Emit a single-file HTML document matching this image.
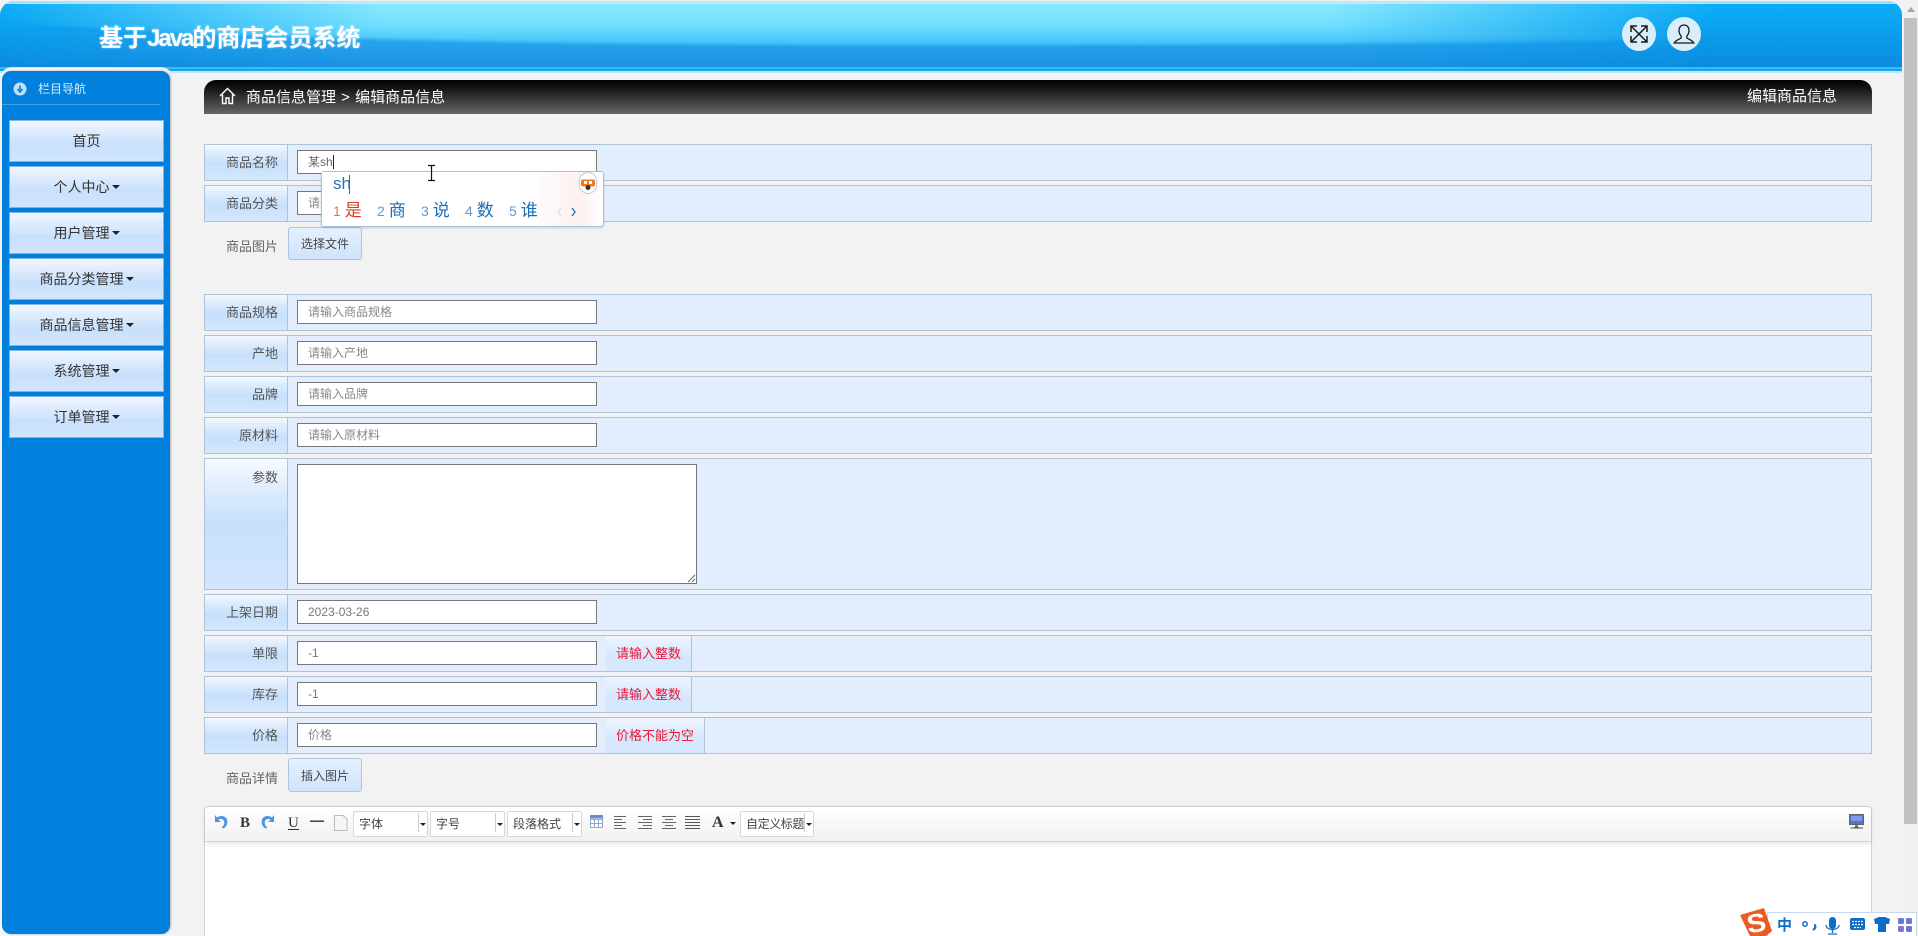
<!DOCTYPE html>
<html lang="zh-CN"><head><meta charset="utf-8"><title>编辑商品信息</title>
<style>
*{box-sizing:border-box;margin:0;padding:0}
html,body{width:1918px;height:936px;overflow:hidden;background:#f2f2f2;font-family:"Liberation Sans","Noto Sans CJK SC",sans-serif;font-size:13px;color:#555}
#page{position:relative;width:1918px;height:936px;overflow:hidden}
.a{position:absolute}
#hd{left:0;top:1px;width:1902px;height:72px;border-radius:14px 14px 0 0;overflow:hidden;background:linear-gradient(180deg,#0db0fa 0,#0a9eec 45%,#0b8ce0 90%)}
#sbwrap{left:0;top:68px;width:173px;height:868px;background:#f6f6f6;border-radius:12px 12px 0 0;box-shadow:0 -1px 0 #cfe4f4}
#sb{left:2px;top:71px;width:168px;height:863px;background:#0080dc;border-radius:9px;box-shadow:1px 0 2px #aaa}
.btn{position:absolute;left:9px;width:155px;height:42px;background:linear-gradient(180deg,#f1f7ff 0,#d9e9fd 35%,#c8e0fb 60%,#d2e6fd 100%);border:1px solid #7db5e6;text-align:center;line-height:40px;font-size:14px;color:#333}
.car{display:inline-block;width:0;height:0;border-left:4px solid transparent;border-right:4px solid transparent;border-top:4px solid #222;vertical-align:3px;margin-left:2px}
#bc{left:204px;top:80px;width:1668px;height:34px;border-radius:12px 12px 0 0;background:linear-gradient(180deg,#000 0,#161616 25%,#666 100%);color:#fff;font-size:15px;line-height:36px}
.row{position:absolute;left:204px;width:1668px;background:#e2eefe;border:1px solid #aec3d9}
.lab{position:absolute;left:0;top:0;bottom:0;width:83px;background:linear-gradient(180deg,#f4f8ff 0,#dcebfd 25%,#c7e0fb 55%,#d4e7fd 100%);border-right:1px solid #aec3d9;text-align:right;padding-right:9px;line-height:36px;color:#555}
.lab2{position:absolute;left:204px;width:83px;text-align:right;padding-right:9px;color:#666}
.inp{position:absolute;left:92px;top:5px;width:300px;height:24px;background:#fff;border:1px solid #777;font-size:12px;line-height:23px;padding-left:10px;color:#888}
.err{position:absolute;left:401px;top:0;bottom:0;background:linear-gradient(180deg,#eef5ff 0,#d5e7fc 60%,#d6e8fd 100%);border-right:1px solid #aec3d9;color:#e8173a;font-size:13px;line-height:36px;text-align:center;white-space:nowrap}
.fb{position:absolute;left:288px;width:74px;background:linear-gradient(180deg,#e6f0fe 0,#cfe3fb 100%);border:1px solid #a9c6e4;border-radius:3px;text-align:center;font-size:12px;color:#444}
#ed{left:204px;top:806px;width:1668px;height:130px;background:#fff;border:1px solid #d2d2d2;border-bottom:0;border-radius:4px 4px 0 0}
#tb{left:0;top:0;right:0;height:35px;background:linear-gradient(180deg,#fff 0,#f1f1f1 100%);border-bottom:1px solid #d4d4d4;box-shadow:0 2px 5px rgba(0,0,0,.1);border-radius:4px 4px 0 0}
.sel{position:absolute;top:811px;height:26px;width:75px;background:#fff;border:1px solid #d8d8d8;border-radius:2px;font-size:12px;line-height:24px;padding-left:5px;color:#444;white-space:nowrap;overflow:hidden}
.sel i{position:absolute;right:8px;top:1px;bottom:4px;width:1px;background:#ccc}
.sel b{position:absolute;right:1px;top:11px;width:0;height:0;border-left:3px solid transparent;border-right:3px solid transparent;border-top:3px solid #222}
.cand{position:absolute;top:199px;font-size:17px;line-height:24px;color:#1e6db5;white-space:nowrap}
.cand span{font-size:14px;color:#6d98c4;margin-right:4px}
</style></head><body>
<div id="page">

<div id="hd" class="a">
<svg class="a" style="left:0;top:0" width="1902" height="72">
<defs>
<linearGradient id="w" x1="0" y1="0" x2="0" y2="1"><stop offset="0" stop-color="#8ce8ff"/><stop offset=".55" stop-color="#72dffe"/><stop offset="1" stop-color="#3ec2f8"/></linearGradient>
<linearGradient id="fade" x1="0" y1="0" x2="1" y2="0"><stop offset="0" stop-color="#000"/><stop offset=".2" stop-color="#fff"/><stop offset=".7" stop-color="#fff"/><stop offset=".9" stop-color="#000"/></linearGradient>
<linearGradient id="lo" x1="0" y1="0" x2="0" y2="1"><stop offset="0" stop-color="#2eaaf0"/><stop offset="1" stop-color="#1b90e2"/></linearGradient>
<mask id="m"><rect width="1902" height="72" fill="url(#fade)"/></mask>
<filter id="bl" x="-5%" y="-10%" width="110%" height="120%"><feGaussianBlur stdDeviation="1.500"/></filter>
</defs>
<rect y="30" width="1902" height="38" fill="url(#lo)" mask="url(#m)"/>
<path d="M0 0H1902V30C1700 42 1300 44 900 44C600 44 300 40 0 22Z" fill="url(#w)" mask="url(#m)" filter="url(#bl)"/>
<rect width="1902" height="3" fill="#cdeefc" opacity=".8"/>
<rect x="0" y="66" width="1902" height="2" fill="#36bdf0"/>
<rect x="0" y="68" width="1902" height="2" fill="#1aa5ea"/>
<rect x="0" y="70" width="1902" height="2" fill="#bfe6f8"/>
</svg>
</div>
<div class="a" style="left:99px;top:21px;font-size:24px;font-weight:700;color:#fff;line-height:36px;white-space:nowrap;text-shadow:0 0 2px rgba(255,255,255,.5)">基于<span style="letter-spacing:-2px">Java</span>的商店会员系统</div>

<svg class="a" style="left:1620px;top:15px" width="84" height="38">
<circle cx="19" cy="19" r="17" fill="#d8eefb"/><circle cx="64" cy="19" r="17" fill="#d8eefb"/>
<path d="M11 11L27 27M27 11L11 27M11 17V11H17M21 11H27V17M11 21V27H17M21 27H27V21" fill="none" stroke="#1a1a1a" stroke-width="1.500"/>
<path d="M64 10c-3.500 0-5 2.700-5 5.500 0 2.700 1.200 4.500 2.200 5.700v1.800c-1.800 1.300-5.500 2-7 5h19.600c-1.500-3-5.200-3.700-7-5v-1.800c1-1.200 2.200-3 2.200-5.700 0-2.800-1.500-5.500-5-5.500z" fill="none" stroke="#1a1a1a" stroke-width="1.300"/>
</svg>

<!-- scrollbar -->
<div class="a" style="left:1903px;top:0;width:15px;height:936px;background:#f1f1f1"></div>
<div class="a" style="left:1904px;top:18px;width:13px;height:806px;background:#c1c1c1"></div>
<div class="a" style="left:1907px;top:7px;width:0;height:0;border-left:4px solid transparent;border-right:4px solid transparent;border-bottom:5px solid #a5a5a5"></div>

<!-- sidebar -->
<div id="sbwrap" class="a"></div>
<div id="sb" class="a"></div>
<svg class="a" style="left:13px;top:82px" width="14" height="14"><circle cx="7" cy="7" r="6.500" fill="#bfe3fa"/><path d="M7 3.500V9M4.500 7L7 10L9.500 7" stroke="#1a86d8" stroke-width="1.800" fill="none"/></svg>
<div class="a" style="left:38px;top:80px;color:#d8ecfb;font-size:12px;line-height:18px">栏目导航</div>
<div class="a" style="left:2px;top:104px;width:158px;height:1px;background:#3aa3ea"></div>
<div class="btn" style="top:120px">首页</div>
<div class="btn" style="top:166px">个人中心<span class="car"></span></div>
<div class="btn" style="top:212px">用户管理<span class="car"></span></div>
<div class="btn" style="top:258px">商品分类管理<span class="car"></span></div>
<div class="btn" style="top:304px">商品信息管理<span class="car"></span></div>
<div class="btn" style="top:350px">系统管理<span class="car"></span></div>
<div class="btn" style="top:396px">订单管理<span class="car"></span></div>

<!-- breadcrumb -->
<div id="bc" class="a">
<svg class="a" style="left:15px;top:7px" width="17" height="18"><path d="M1 9L8.500 1.500L16 9M3.500 7.500V16.500H7V11H10V16.500H13.500V7.500" fill="none" stroke="#fff" stroke-width="1.400"/></svg>
<span class="a" style="left:42px;top:0;white-space:nowrap">商品信息管理<span style="margin:0 1px"> &gt; </span>编辑商品信息</span>
<span class="a" style="left:1543px;top:-1px;white-space:nowrap">编辑商品信息</span>
</div>

<!-- rows -->
<div class="row" style="top:144px;height:37px"><div class="lab">商品名称</div><div class="inp" style="color:#666">某sh<span style="border-right:1px solid #222"></span></div></div>
<div class="row" style="top:185px;height:37px"><div class="lab">商品分类</div><div class="inp">请选择商品分类</div></div>
<div class="lab2" style="top:237px;line-height:20px">商品图片</div>
<div class="fb" style="top:227px;height:33px;line-height:33px">选择文件</div>
<div class="row" style="top:294px;height:37px"><div class="lab">商品规格</div><div class="inp">请输入商品规格</div></div>
<div class="row" style="top:335px;height:37px"><div class="lab">产地</div><div class="inp">请输入产地</div></div>
<div class="row" style="top:376px;height:37px"><div class="lab">品牌</div><div class="inp">请输入品牌</div></div>
<div class="row" style="top:417px;height:37px"><div class="lab">原材料</div><div class="inp">请输入原材料</div></div>
<div class="row" style="top:458px;height:132px"><div class="lab" style="line-height:37px;background:linear-gradient(180deg,#f8fbff 0,#dcebfd 25%,#c7e0fb 50%,#d2e6fd 100%)">参数</div>
<div class="inp" style="top:5px;width:400px;height:120px"><svg class="a" style="right:0;bottom:0" width="9" height="9"><path d="M8 1L1 8M8 5L5 8" stroke="#666" stroke-width="1"/></svg></div></div>
<div class="row" style="top:594px;height:37px"><div class="lab">上架日期</div><div class="inp" style="color:#777">2023-03-26</div></div>
<div class="row" style="top:635px;height:37px"><div class="lab">单限</div><div class="inp" style="color:#777">-1</div><div class="err" style="width:86px">请输入整数</div></div>
<div class="row" style="top:676px;height:37px"><div class="lab">库存</div><div class="inp" style="color:#777">-1</div><div class="err" style="width:86px">请输入整数</div></div>
<div class="row" style="top:717px;height:37px"><div class="lab">价格</div><div class="inp">价格</div><div class="err" style="width:99px">价格不能为空</div></div>
<div class="lab2" style="top:769px;line-height:20px">商品详情</div>
<div class="fb" style="top:758px;height:34px;line-height:34px">插入图片</div>

<!-- editor -->
<div id="ed" class="a"><div id="tb" class="a"></div></div>
<svg class="a" style="left:205px;top:807px" width="560" height="34">
<path d="M10 8V15H16L13.500 12.700C15 11.500 18 11.800 19 14C20 16.500 18.500 19 16.500 20.500L18.500 21.500C22 19.500 23.500 15.500 21.500 11.500C19.500 8.500 15 8.200 12 10.500Z" fill="#4f97da"/>
<text x="35" y="20" font-family="Liberation Serif" font-weight="700" font-size="15" fill="#333">B</text>
<path d="M69 8V15H63L65.500 12.700C64 11.500 61 11.800 60 14C59 16.500 60.500 19 62.500 20.500L60.500 21.500C57 19.500 55.500 15.500 57.500 11.500C59.500 8.500 64 8.200 67 10.500Z" fill="#4f97da"/>
<text x="83" y="20" font-family="Liberation Serif" font-size="15" fill="#333">U</text>
<rect x="83" y="22" width="11" height="1" fill="#333"/>
<rect x="105" y="13.500" width="14" height="1.400" fill="#333"/>
<path d="M129.500 8.500H138L142 12V23.500H129.500Z" fill="#f6f6f6" stroke="#bbb"/>
<path d="M385.500 8.500H397.500V20.500H385.500ZM385.500 12.500H397.500M385.500 16.500H397.500M389.500 12.500V20.500M393.500 12.500V20.500" fill="#fff" stroke="#8fa6d0"/>
<rect x="385" y="8" width="13" height="3.500" fill="#6d8cc8"/>
<path d="M409 9.500H421M409 12.500H417M409 15.500H421M409 18.500H417M409 21.500H421" stroke="#666"/>
<path d="M433 9.500H447M438 12.500H447M433 15.500H447M438 18.500H447M433 21.500H447" stroke="#666"/>
<path d="M457 9.500H471M460 12.500H468M457 15.500H471M460 18.500H468M457 21.500H471" stroke="#666"/>
<path d="M480 9.500H495M480 12.500H495M480 15.500H495M480 18.500H495M480 21.500H495" stroke="#555"/>
<text x="507" y="20" font-family="Liberation Serif" font-weight="700" font-size="16" fill="#333">A</text>
<path d="M525 15H531L528 18Z" fill="#222"/>
</svg>
<div class="sel" style="left:353px">字体<i></i><b></b></div>
<div class="sel" style="left:430px">字号<i></i><b></b></div>
<div class="sel" style="left:507px">段落格式<i></i><b></b></div>
<div class="sel" style="left:740px;width:74px;letter-spacing:-.4px">自定义标题<i></i><b></b></div>
<svg class="a" style="left:1849px;top:814px" width="16" height="15"><rect x=".5" y=".5" width="14" height="10" fill="#5872c8" stroke="#666"/><rect x="2" y="2" width="11" height="5" fill="#7f9ae0"/><path d="M5 13.500H10M1.500 14H14" stroke="#555"/><rect x="6" y="11" width="3" height="2" fill="#777"/></svg>

<!-- IME popup -->
<div class="a" style="left:321px;top:171px;width:283px;height:56px;background:linear-gradient(90deg,#fff 72%,#fdf0f0 92%,#fff 100%);border:1px solid #a9c2dc;border-radius:3px;box-shadow:0 1px 2px rgba(0,0,0,.15)"></div>
<div class="a" style="left:333px;top:172px;font-size:17px;line-height:24px;color:#2a6fb5">sh</div>
<div class="a" style="left:349px;top:175px;width:1px;height:19px;background:#c83232"></div>
<div class="cand" style="left:333px;color:#d8402c"><span style="color:#e8705c">1</span>是</div>
<div class="cand" style="left:377px"><span>2</span>商</div>
<div class="cand" style="left:421px"><span>3</span>说</div>
<div class="cand" style="left:465px"><span>4</span>数</div>
<div class="cand" style="left:509px"><span>5</span>谁</div>
<svg class="a" style="left:555px;top:205px" width="26" height="14"><path d="M6 3L3 7L6 11" fill="none" stroke="#d5dfe9" stroke-width="1.300"/><path d="M17 3L20 7L17 11" fill="none" stroke="#2a6fb5" stroke-width="1.300"/></svg>
<svg class="a" style="left:577px;top:171px" width="22" height="24"><ellipse cx="11" cy="12" rx="9" ry="10.500" fill="#fff" stroke="#b8cde4"/><rect x="4" y="8.500" width="14" height="7" rx="2" fill="#ee7a1e"/><rect x="7" y="10" width="3" height="3" fill="#fff"/><rect x="12" y="10" width="3" height="3" fill="#fff"/><circle cx="11" cy="16.500" r="2.500" fill="#333"/></svg>
<svg class="a" style="left:425px;top:164px" width="13" height="18"><path d="M3 1.500H10M3 16.500H10M6.500 1.500V16.500" stroke="#111" stroke-width="1.200" fill="none"/></svg>

<!-- Sogou bar -->
<div class="a" style="left:1767px;top:912px;width:150px;height:24px;background:#fff;border:1px solid #c7d8ee;border-bottom:0"></div>
<svg class="a" style="left:1738px;top:907px" width="180" height="29">
<path d="M2 8L26 1L34 24L28 29H12Z" fill="#ef5a22"/>
<text x="8" y="25" font-family="Liberation Sans" font-weight="700" font-size="26" fill="#fff" transform="rotate(-10 18 16) scale(1.100 1)">S</text>
<text x="39" y="23" font-family="Liberation Sans,Noto Sans CJK SC" font-weight="700" font-size="15" fill="#0c6cc8">中</text>
<circle cx="67" cy="17" r="2.200" fill="none" stroke="#0c6cc8" stroke-width="1.500"/><path d="M76 18c2 0 2 3-1 5" stroke="#0c6cc8" stroke-width="2.200" fill="none"/>
<rect x="91" y="10" width="7" height="12" rx="3.500" fill="#0c6cc8"/><path d="M88 18c0 6 13 6 13 0M94.500 23V26M90 27H99" stroke="#0c6cc8" stroke-width="1.300" fill="none"/>
<rect x="112" y="11" width="15" height="12" rx="2" fill="#0c6cc8"/><path d="M114 14.500H125M114 17.500H125M116 20.500H123" stroke="#fff" stroke-width="1.300" stroke-dasharray="2 1"/>
<path d="M136 12L141 10H147L152 12L151 17H148V25H140V17H137Z" fill="#0c6cc8"/>
<rect x="160" y="11" width="6" height="6" rx="1.500" fill="#6a78d8"/><rect x="168" y="11" width="6" height="6" rx="1.500" fill="#6a78d8"/><rect x="160" y="19" width="6" height="6" rx="1.500" fill="#8a70d8"/><rect x="168" y="19" width="6" height="6" rx="1.500" fill="#6a78d8"/>
</svg>
</div>
</body></html>
